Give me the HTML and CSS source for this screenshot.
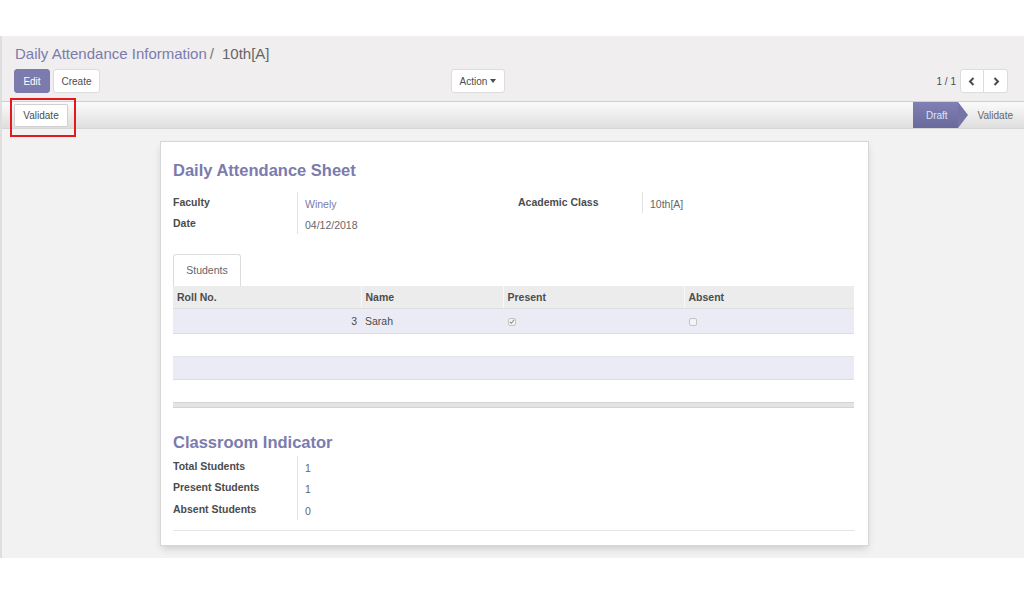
FILE: index.html
```html
<!DOCTYPE html>
<html>
<head>
<meta charset="utf-8">
<link rel="stylesheet" href="styles.css">
</head>
<body>
<div class="top-gap"></div>
<div class="app">
  <div class="control-panel">
    <div class="breadcrumb"><span class="bc-link">Daily Attendance Information</span><span class="bc-sep">/</span><span class="bc-active">10th[A]</span></div>
    <div class="cp-row">
      <div class="cp-left">
        <button class="btn btn-primary">Edit</button>
        <button class="btn btn-default">Create</button>
      </div>
      <div class="cp-center">
        <button class="btn btn-default btn-action">Action <span class="caret"></span></button>
      </div>
      <div class="cp-right">
        <span class="pager-value">1 / 1</span>
        <div class="btn-group">
          <button class="btn btn-default btn-icon"><svg width="8" height="9" viewBox="0 0 8 9"><polyline points="5.5,1 2,4.5 5.5,8" fill="none" stroke="#4c4c4c" stroke-width="2"/></svg></button>
          <button class="btn btn-default btn-icon"><svg width="8" height="9" viewBox="0 0 8 9"><polyline points="2.5,1 6,4.5 2.5,8" fill="none" stroke="#4c4c4c" stroke-width="2"/></svg></button>
        </div>
      </div>
    </div>
  </div>
  <div class="statusbar">
    <div class="sb-buttons">
      <button class="btn btn-default btn-sb">Validate</button>
      <span class="highlight"></span>
    </div>
    <div class="sb-states">
      <span class="state state-active">Draft</span>
      <span class="state">Validate</span>
    </div>
  </div>
  <div class="sheet-bg">
    <div class="sheet">
      <h1 class="sheet-title">Daily Attendance Sheet</h1>
      <div class="groups">
        <div class="group group-left">
          <div class="label">Faculty</div><div class="value link">Winely</div>
          <div class="label">Date</div><div class="value">04/12/2018</div>
        </div>
        <div class="group group-right">
          <div class="label">Academic Class</div><div class="value">10th[A]</div>
        </div>
      </div>
      <div class="tabs"><span class="tab">Students</span></div>
      <table class="list">
        <thead>
          <tr><th class="c1">Roll No.</th><th class="c2">Name</th><th class="c3">Present</th><th class="c4">Absent</th></tr>
        </thead>
        <tbody>
          <tr class="row-a"><td class="num">3</td><td>Sarah</td><td><span class="cb"><svg width="7" height="7" viewBox="0 0 7 7"><polyline points="1,3.8 2.8,5.5 6,1.5" fill="none" stroke="#888" stroke-width="1.2"/></svg></span></td><td><span class="cb"></span></td></tr>
          <tr class="row-b"><td></td><td></td><td></td><td></td></tr>
          <tr class="row-a"><td></td><td></td><td></td><td></td></tr>
          <tr class="row-b"><td></td><td></td><td></td><td></td></tr>
        </tbody>
        <tfoot>
          <tr><td colspan="4"></td></tr>
        </tfoot>
      </table>
      <h2 class="sheet-title sub-title">Classroom Indicator</h2>
      <div class="group group-stats">
        <div class="label">Total Students</div><div class="value">1</div>
        <div class="label">Present Students</div><div class="value">1</div>
        <div class="label">Absent Students</div><div class="value">0</div>
      </div>
      <div class="sheet-hr"></div>
    </div>
  </div>
</div>
</body>
</html>
```
FILE: styles.css
```css
* { box-sizing: border-box; }
html, body { margin: 0; padding: 0; background: #fff; }
body {
  font-family: "Liberation Sans", Arial, sans-serif;
  color: #4c4c4c;
  width: 1024px;
  height: 594px;
  overflow: hidden;
}
.top-gap { height: 36px; background: #fff; }
.app {
  height: 522px;
  background: #f2f2f2;
  border-left: 2px solid #dedede;
  position: relative;
  overflow: hidden;
}
.app::before {
  content: "";
  position: absolute;
  left: -2px;
  top: 251px;
  width: 2px;
  height: 20px;
  background: #7c7bad;
}
.control-panel {
  background: #f0eeee;
  padding: 8px 16px 8px 13px;
  border-bottom: 1px solid #cfcfcf;
}
.breadcrumb {
  font-size: 15px;
  line-height: 20px;
  height: 19px;
  white-space: nowrap;
}
.bc-link { color: #7c7bad; }
.bc-sep { color: #777; margin: 0 8px 0 3px; }
.bc-active { color: #666; }
.cp-row {
  margin-top: 6px;
  display: flex;
  align-items: center;
  height: 24px;
}
.cp-left { width: 437px; display: flex; gap: 3px; margin-left: -1px; }
.cp-right { margin-left: auto; display: flex; align-items: center; }
.btn {
  font-family: "Liberation Sans", Arial, sans-serif;
  font-size: 10px;
  height: 24px;
  padding: 0 8px;
  border-radius: 3px;
  border: 1px solid #dcdcdc;
  background: #fff;
  color: #4c4c4c;
  display: inline-flex;
  align-items: center;
  justify-content: center;
  margin: 0;
}
.btn-primary {
  background: #7c7bad;
  border-color: #7c7bad;
  color: #fff;
  width: 36px;
}
.btn-default { width: 47px; }
.btn-action { width: 54px; padding: 0; }
.caret {
  display: inline-block;
  margin-left: 3px;
  width: 0; height: 0;
  border-left: 3.5px solid transparent;
  border-right: 3.5px solid transparent;
  border-top: 4px solid #4c4c4c;
}
.pager-value { font-size: 10px; color: #4c4c4c; margin-right: 4px; }
.btn-group { display: flex; }
.btn-icon { width: 24px; padding: 0; }
.btn-group .btn-icon:first-child { border-top-right-radius: 0; border-bottom-right-radius: 0; }
.btn-group .btn-icon:last-child { border-top-left-radius: 0; border-bottom-left-radius: 0; border-left: none; }
.statusbar {
  height: 27px;
  background: linear-gradient(to bottom, #fbfbfb, #dedede);
  border-bottom: 1px solid #d6d6d6;
  display: flex;
  align-items: center;
  justify-content: space-between;
}
.sb-buttons {
  position: relative;
  padding-left: 12px;
  display: flex;
  align-items: center;
}
.btn-sb { width: 54px; height: 23px; border-radius: 1px; border-color: #d0d0d0; padding: 0; }
.highlight {
  position: absolute;
  left: 8px;
  top: -6px;
  width: 66px;
  height: 39px;
  border: 2px solid #e5191c;
  z-index: 2;
}
.sb-states { display: flex; align-items: stretch; height: 26px; align-self: flex-start; }
.state {
  font-size: 10px;
  color: #666;
  display: flex;
  align-items: center;
  padding: 0 11px 0 20px;
}
.state-active {
  position: relative;
  background: linear-gradient(to bottom, #8180b4, #6a699c);
  color: #dce6f6;
  padding: 0 10px 0 13px;
  height: 26px;
}
.state-active::after {
  content: "";
  position: absolute;
  right: -10px;
  top: 0;
  width: 0; height: 0;
  border-top: 13px solid transparent;
  border-bottom: 13px solid transparent;
  border-left: 10px solid #7574a7;
}
.sheet-bg { padding-top: 12px; }
.sheet {
  width: 709px;
  margin-left: 158px;
  background: #fff;
  border: 1px solid #d6d6d6;
  box-shadow: 0 4px 8px -2px rgba(0,0,0,0.18);
  padding: 17px 13px 14px 12px;
}
.sheet-title {
  margin: 0;
  font-size: 16.5px;
  line-height: 22px;
  font-weight: bold;
  color: #7c7bad;
}
.groups { display: flex; margin-top: 11px; }
.group {
  display: grid;
  grid-template-columns: 124px auto;
  grid-auto-rows: 21px;
  font-size: 10.5px;
}
.group-left { width: 345px; }
.group-right { flex: 1; align-content: start; }
.label {
  font-weight: bold;
  color: #4c4c4c;
  padding-top: 4px;
}
.value {
  border-left: 1px solid #e2e2e2;
  padding-left: 7px;
  padding-top: 6px;
  color: #666;
}
.link { color: #7c7bad; }
.tabs {
  margin-top: 20px;
  height: 32px;
  display: flex;
  align-items: flex-end;
}
.tab {
  height: 32px;
  width: 68px;
  border: 1px solid #dcdcdc;
  border-bottom: none;
  border-radius: 3px 3px 0 0;
  background: #fff;
  font-size: 10.5px;
  color: #666;
  display: flex;
  align-items: center;
  justify-content: center;
  padding-bottom: 2px;
}
.list {
  width: 681px;
  border-collapse: collapse;
  font-size: 10.5px;
}
.list th {
  background: #ececec;
  height: 22px;
  text-align: left;
  padding: 0 5px 0 4px;
  font-weight: bold;
  color: #4c4c4c;
  border-left: 1px solid #f8f8f8;
  border-bottom: 1px solid #e0e0e0;
}
.list th:first-child { border-left: none; }
.c1 { width: 188px; }
.c2 { width: 142px; }
.c3 { width: 181px; }
.list td { padding: 0 4px; color: #4c4c4c; }
.row-a td { background: #ebebf5; border-bottom: 1px solid #dcdce6; }
.row-b td { background: #fff; }
.list tbody tr:nth-child(1) td { height: 25px; }
.list tbody tr:nth-child(2) td { height: 23px; }
.list tbody tr:nth-child(3) td { height: 23px; border-top: 1px solid #e4e4ea; }
.list tbody tr:nth-child(4) td { height: 23px; }
.num { text-align: right; }
.cb {
  display: inline-flex;
  align-items: center;
  justify-content: center;
  width: 8px;
  height: 8px;
  border: 1px solid #c4c4c4;
  border-radius: 2px;
  background: #f4f4f4;
  vertical-align: middle;
  margin-left: 1px;
}
.list tfoot td {
  height: 5px;
  background: #e4e4e4;
  border-top: 1px solid #d4d4d4;
  border-bottom: 1px solid #d4d4d4;
  padding: 0;
}
.sub-title { margin-top: 23px; }
.group-stats { margin-top: 3px; grid-auto-rows: 21.5px; }
.group-stats .label { padding-top: 4px; }
.group-stats .value { padding-top: 6px; color: #666; }
.sheet-hr {
  margin-top: 10px;
  height: 1px;
  background: #e4e4e4;
}
```
